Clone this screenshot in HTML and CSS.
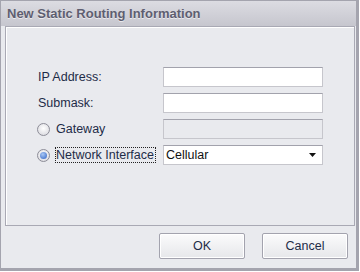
FILE: index.html
```html
<!DOCTYPE html>
<html lang="en">
<head>
    <meta charset="UTF-8">
    <meta name="viewport" content="width=device-width, initial-scale=1.0">
    <title>New Static Routing Information</title>
    <link rel="stylesheet" href="styles.css">
</head>
<body>
    <div class="window">
        <div class="titlebar">New Static Routing Information</div>
        <div class="panel">
            <div class="form">
                <label class="label" for="ip">IP Address:</label>
                <input class="field" type="text" id="ip">

                <label class="label" for="mask">Submask:</label>
                <input class="field" type="text" id="mask">

                <div class="label radio-label">
                    <span class="radio"></span>
                    <span class="radio-text">Gateway</span>
                </div>
                <input class="field" type="text" disabled>

                <div class="label radio-label">
                    <span class="radio checked"><span class="dot"></span></span>
                    <span class="radio-text focused">Network Interface</span>
                </div>
                <div class="field select">
                    <span>Cellular</span>
                    <svg width="7" height="4" viewBox="0 0 7 4"><path d="M0 0h7L3.5 4z" fill="#111"/></svg>
                </div>
            </div>
        </div>
        <div class="buttons">
            <button class="btn">OK</button>
            <button class="btn">Cancel</button>
        </div>
    </div>
</body>
</html>
```

FILE: styles.css
```css
body {
    margin: 0;
    padding: 0;
    background: #fff;
    font-family: "Liberation Sans", Arial, sans-serif;
    font-size: 12.5px;
}

.window {
    box-sizing: border-box;
    width: 359px;
    height: 271px;
    border-style: solid;
    border-color: #a4a4ae;
    border-width: 1px 3px 3px 1px;
    background: #e9eaee;
    display: flex;
    flex-direction: column;
}

.titlebar {
    height: 25px;
    line-height: 25px;
    padding-left: 6px;
    font-size: 13px;
    font-weight: bold;
    color: #5e5e70;
    text-shadow: 0 1px 0 rgba(255, 255, 255, 0.6);
    background: linear-gradient(#dcdce2, #c6c6ce);
}

.panel {
    box-sizing: border-box;
    height: 200px;
    margin: 0 1px 0 4px;
    border: 1px solid #a9a9b4;
    box-shadow: inset 1px 1px 0 #fff;
    background: #e9eaee;
}

.form {
    display: grid;
    grid-template-columns: 125px 160px;
    grid-auto-rows: 20px;
    row-gap: 6px;
    padding: 40px 0 0 32px;
}

.label {
    display: flex;
    align-items: center;
    color: #1e2c48;
}

.radio-label {
    margin-left: -1px;
    gap: 5px;
}

.radio {
    box-sizing: border-box;
    width: 13px;
    height: 13px;
    border-radius: 50%;
    border: 1px solid #8d8d98;
    background: radial-gradient(circle at 50% 40%, #ffffff, #d4d4da);
    display: flex;
    align-items: center;
    justify-content: center;
}

.radio .dot {
    width: 7px;
    height: 7px;
    border-radius: 50%;
    background: radial-gradient(circle at 40% 35%, #a9c8f5, #2f62c4);
}

.radio-text {
    padding: 1px;
}

.focused {
    outline: 1px dotted #222;
    outline-offset: -1px;
    padding: 1px 2px 1px 1px;
}

.field {
    box-sizing: border-box;
    width: 160px;
    height: 20px;
    margin: 0;
    padding: 0 3px;
    border: 1px solid #c6c6cc;
    border-top-color: #a2a2ac;
    background: #fff;
    font: inherit;
    color: #1e2c48;
}

.field:disabled {
    background: #e9eaee;
}

.select {
    display: flex;
    align-items: center;
    justify-content: space-between;
    padding: 0 6px 0 2px;
    color: #111;
}

.buttons {
    display: flex;
    justify-content: flex-end;
    gap: 17px;
    padding: 7px 8px 0 0;
}

.btn {
    box-sizing: border-box;
    width: 86px;
    height: 26px;
    border: 1px solid #a3a3ae;
    border-radius: 2px;
    background: linear-gradient(#fbfbfc, #e6e7ea);
    box-shadow: inset 0 0 0 1px #fff;
    font: inherit;
    color: #1e2c48;
}
```
